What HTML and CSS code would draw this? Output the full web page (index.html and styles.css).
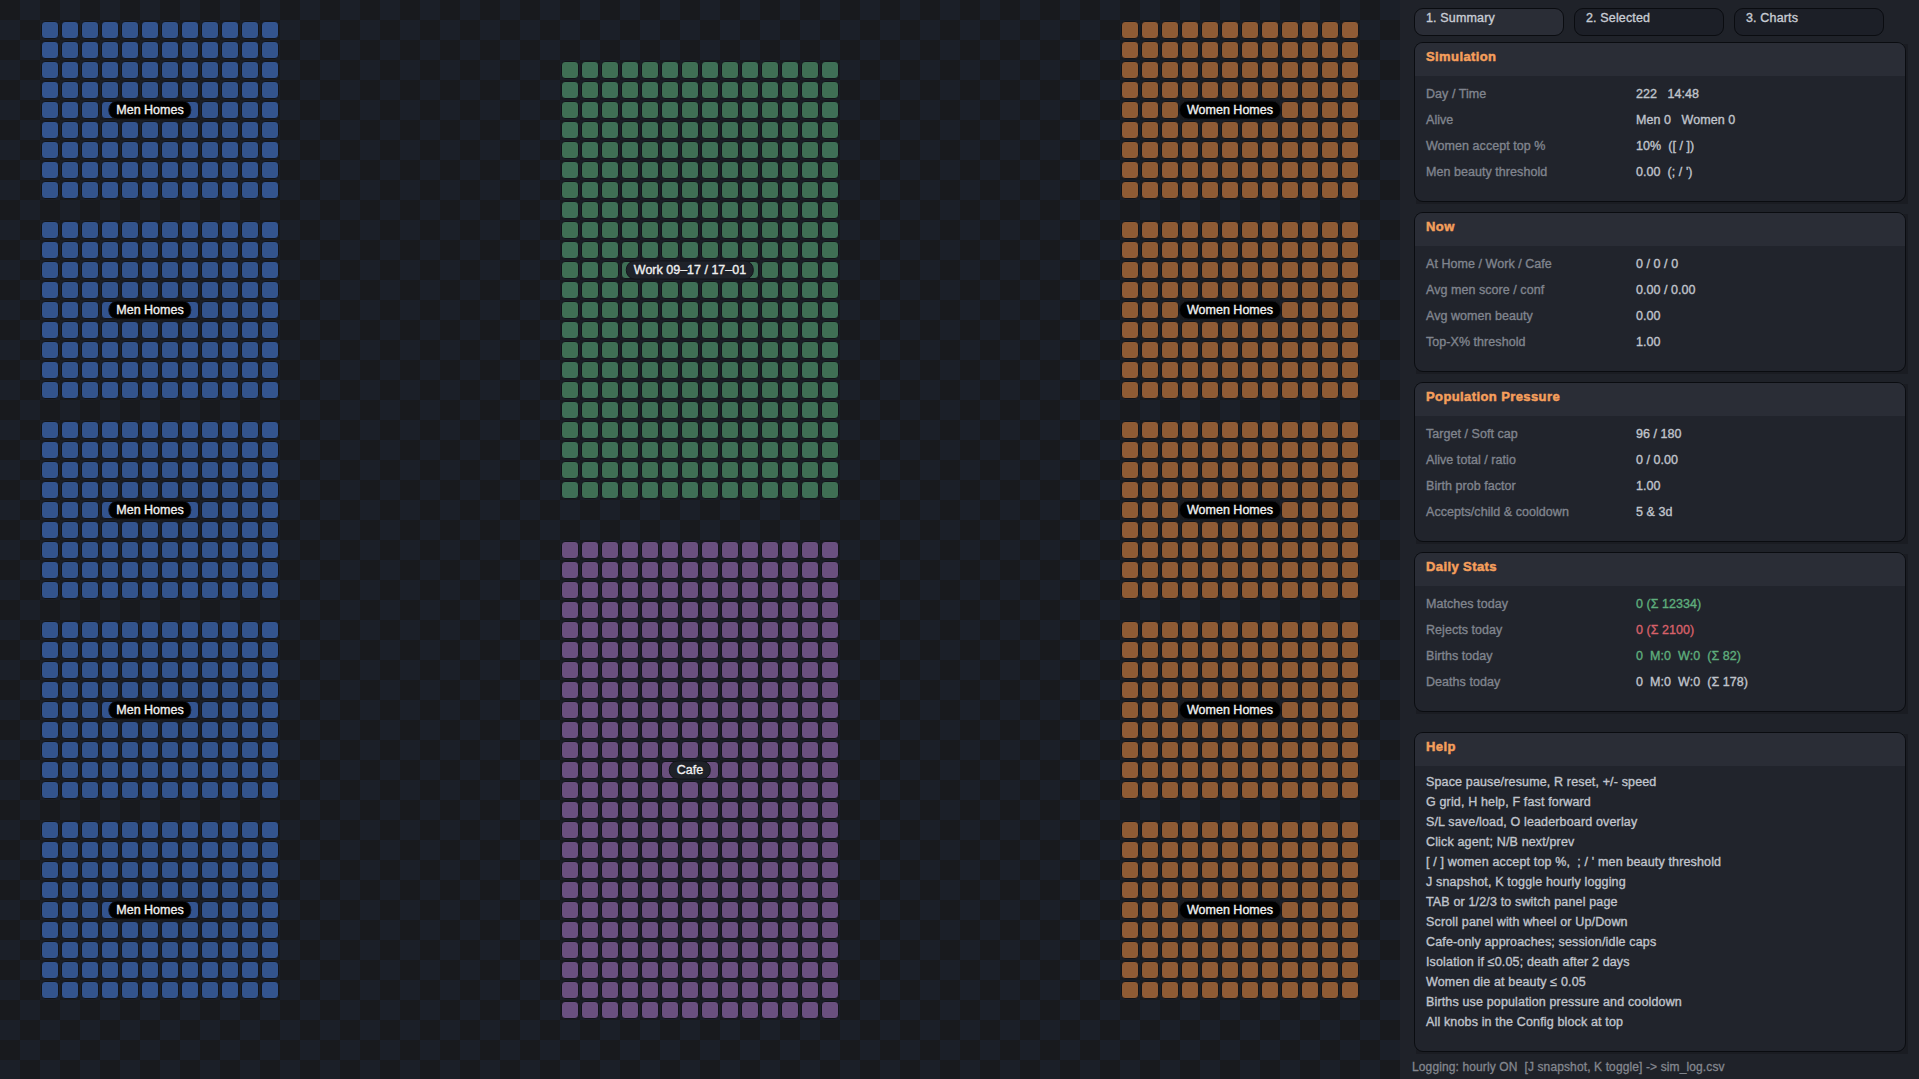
FILE: index.html
```html
<!DOCTYPE html>
<html lang="en">
<head>
<meta charset="utf-8">
<title>Simulation</title>
<link rel="stylesheet" href="styles.css">
</head>
<body>
<main class="app">
  <section class="world">
    <div class="col">
      <div class="block men" data-cols="12" data-rows="9"><span class="tag tag-dark">Men Homes</span></div>
      <div class="block men" data-cols="12" data-rows="9"><span class="tag tag-dark">Men Homes</span></div>
      <div class="block men" data-cols="12" data-rows="9"><span class="tag tag-dark">Men Homes</span></div>
      <div class="block men" data-cols="12" data-rows="9"><span class="tag tag-dark">Men Homes</span></div>
      <div class="block men" data-cols="12" data-rows="9"><span class="tag tag-dark">Men Homes</span></div>
    </div>
    <div class="col col-mid">
      <div class="block work" data-cols="14" data-rows="22"><span class="tag tag-slate tag-even">Work 09–17 / 17–01</span></div>
      <div class="block cafe" data-cols="14" data-rows="24"><span class="tag tag-slate tag-even">Cafe</span></div>
    </div>
    <div class="col">
      <div class="block women" data-cols="12" data-rows="9"><span class="tag tag-dark">Women Homes</span></div>
      <div class="block women" data-cols="12" data-rows="9"><span class="tag tag-dark">Women Homes</span></div>
      <div class="block women" data-cols="12" data-rows="9"><span class="tag tag-dark">Women Homes</span></div>
      <div class="block women" data-cols="12" data-rows="9"><span class="tag tag-dark">Women Homes</span></div>
      <div class="block women" data-cols="12" data-rows="9"><span class="tag tag-dark">Women Homes</span></div>
    </div>
  </section>
  <aside class="side">
    <nav class="tabs">
      <div class="tab tab-on">1. Summary</div>
      <div class="tab">2. Selected</div>
      <div class="tab">3. Charts</div>
    </nav>
    <section class="panel">
      <h2 class="head">Simulation</h2>
      <dl class="rows">
        <dt>Day / Time</dt><dd>222   14:48</dd>
        <dt>Alive</dt><dd>Men 0   Women 0</dd>
        <dt>Women accept top %</dt><dd>10%  ([ / ])</dd>
        <dt>Men beauty threshold</dt><dd>0.00  (; / ')</dd>
      </dl>
    </section>
    <section class="panel">
      <h2 class="head">Now</h2>
      <dl class="rows">
        <dt>At Home / Work / Cafe</dt><dd>0 / 0 / 0</dd>
        <dt>Avg men score / conf</dt><dd>0.00 / 0.00</dd>
        <dt>Avg women beauty</dt><dd>0.00</dd>
        <dt>Top-X% threshold</dt><dd>1.00</dd>
      </dl>
    </section>
    <section class="panel">
      <h2 class="head">Population Pressure</h2>
      <dl class="rows">
        <dt>Target / Soft cap</dt><dd>96 / 180</dd>
        <dt>Alive total / ratio</dt><dd>0 / 0.00</dd>
        <dt>Birth prob factor</dt><dd>1.00</dd>
        <dt>Accepts/child &amp; cooldown</dt><dd>5 &amp; 3d</dd>
      </dl>
    </section>
    <section class="panel">
      <h2 class="head">Daily Stats</h2>
      <dl class="rows">
        <dt>Matches today</dt><dd class="good">0 (Σ 12334)</dd>
        <dt>Rejects today</dt><dd class="bad">0 (Σ 2100)</dd>
        <dt>Births today</dt><dd class="good">0  M:0  W:0  (Σ 82)</dd>
        <dt>Deaths today</dt><dd>0  M:0  W:0  (Σ 178)</dd>
      </dl>
    </section>
    <section class="panel panel-help">
      <h2 class="head">Help</h2>
      <ul class="help">
        <li>Space pause/resume, R reset, +/- speed</li>
        <li>G grid, H help, F fast forward</li>
        <li>S/L save/load, O leaderboard overlay</li>
        <li>Click agent; N/B next/prev</li>
        <li>[ / ] women accept top %,  ; / ' men beauty threshold</li>
        <li>J snapshot, K toggle hourly logging</li>
        <li>TAB or 1/2/3 to switch panel page</li>
        <li>Scroll panel with wheel or Up/Down</li>
        <li>Cafe-only approaches; session/idle caps</li>
        <li>Isolation if ≤0.05; death after 2 days</li>
        <li>Women die at beauty ≤ 0.05</li>
        <li>Births use population pressure and cooldown</li>
        <li>All knobs in the Config block at top</li>
      </ul>
    </section>
    <footer class="log">Logging: hourly ON  [J snapshot, K toggle] -&gt; sim_log.csv</footer>
  </aside>
</main>
<script src="script.js"></script>
</body>
</html>
```
FILE: styles.css
```css
* { box-sizing: border-box; margin: 0; padding: 0; }
html, body { width: 100%; height: 100%; overflow: hidden; background: #1f2229; }
body { font-family: "Liberation Sans", Arial, sans-serif; font-size: 12.5px; }
.app { display: flex; width: 1919px; height: 1079px; }

.world {
  flex: 0 0 1400px;
  height: 1079px;
  display: flex;
  gap: 282px;
  padding: 21px 0 0 41px;
  background-color: #181a1e;
  background-image:
    conic-gradient(#1b1f28 25%, transparent 0 50%, #1b1f28 0 75%, transparent 0);
  background-size: 40px 40px;
}
.col { display: flex; flex-direction: column; gap: 22px; }
.col-mid { padding-top: 40px; gap: 42px; }

.block { position: relative; display: grid; gap: 2px; grid-auto-rows: 18px; grid-template-columns: repeat(var(--cols), 18px); }
.cell { border: 1px solid #12141a; border-radius: 4px; }
.men .cell { background: #33548e; }
.work .cell { background: #3f6f55; }
.cafe .cell { background: #6a507f; }
.women .cell { background: #8f5b35; }

.tag {
  position: absolute;
  left: calc(50% - 10px);
  top: 50%;
  transform: translate(-50%, -50%);
  height: 19px;
  line-height: 17px;
  padding: 0 7px;
  border-radius: 9px;
  border: 1px solid #12141a;
  color: #f0f0f0;
  white-space: pre;
  -webkit-text-stroke: .35px currentColor;
}
.tag-even { top: calc(50% - 10px); }
.tag-dark { background: #000; }
.tag-slate { background: #1f2229; }

.side { flex: 1; min-width: 0; padding: 8px 0 0 14px; position: relative; z-index: 0; }
.tabs { display: flex; gap: 10px; height: 28px; margin-bottom: 6px; }
.tab {
  width: 150px;
  height: 28px;
  padding: 3px 11px 0;
  line-height: 12px;
  border: 1px solid #0a0c10;
  border-radius: 9px;
  background: #1c1f27;
  color: #c8ccd4;
  white-space: pre;
  letter-spacing: .15px;
  -webkit-text-stroke: .35px currentColor;
}
.tab-on { background: #2a2d36; }

.panel {
  position: relative;
  width: 492px;
  height: 160px;
  margin-bottom: 10px;
  border: 1px solid #0a0c10;
  border-radius: 9px;
  background: #21242c;
}
.panel::before {
  content: "";
  position: absolute;
  inset: 1px -3px -3px 1px;
  background: #1a1c22;
  z-index: -1;
}
.head {
  height: 33px;
  padding: 6px 11px 0;
  background: #2a2d36;
  border-radius: 8px 8px 0 0;
  color: #f59f5c;
  font-size: 13px;
  line-height: 15px;
  font-weight: bold;
  letter-spacing: .4px;
  -webkit-text-stroke: .5px currentColor;
}
.rows { display: grid; grid-template-columns: 210px 1fr; grid-auto-rows: 26px; padding: 5px 11px 0; line-height: 26px; white-space: pre; letter-spacing: .05px; -webkit-text-stroke: .35px currentColor; }
.rows dt { color: #80848e; }
.rows dd { color: #c0c4cc; }
.rows dd.good { color: #5fae7d; }
.rows dd.bad { color: #d8616a; }

.panel-help { height: 320px; margin-top: 20px; margin-bottom: 0; }
.help { list-style: none; padding: 6px 11px 0; color: #c0c4cc; letter-spacing: .15px; -webkit-text-stroke: .35px currentColor; }
.help li { height: 20px; line-height: 20px; white-space: pre; }

.log { position: absolute; left: 12px; top: 1060px; color: #84878f; line-height: 14px; white-space: pre; font-size: 12px; letter-spacing: .12px; -webkit-text-stroke: .3px currentColor; }
```
FILE: script.js
```js
document.querySelectorAll('.block').forEach(function (block) {
  var cols = +block.dataset.cols, rows = +block.dataset.rows;
  block.style.setProperty('--cols', cols);
  var frag = document.createDocumentFragment();
  for (var i = 0; i < cols * rows; i++) {
    var cell = document.createElement('div');
    cell.className = 'cell';
    frag.appendChild(cell);
  }
  block.insertBefore(frag, block.firstChild);
});
```
